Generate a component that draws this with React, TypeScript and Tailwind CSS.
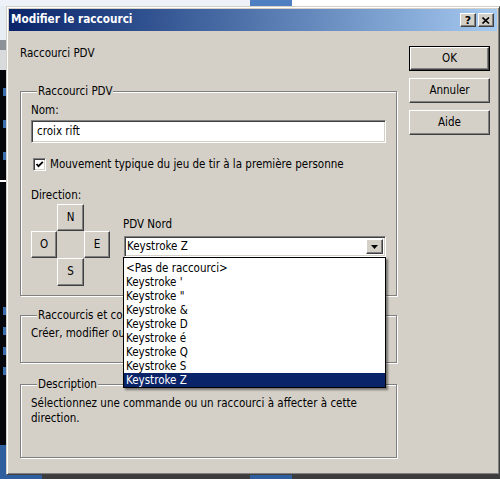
import React from "react";

const raised =
  "border border-t-white border-l-white border-r-[#404040] border-b-[#404040] shadow-[inset_-1px_-1px_0_#808080]";
const sunken =
  "border border-t-[#808080] border-l-[#808080] border-r-white border-b-white shadow-[inset_1px_1px_0_#404040,inset_-1px_-1px_0_#d4d0c8]";
const group =
  "border border-[#808080] shadow-[inset_1px_1px_0_#fff,1px_1px_0_#fff]";

function GroupLabel({ children }: { children: React.ReactNode }) {
  return (
    <div className="w-fit -mt-[8px] ml-[7px] px-[1px] bg-[#d4d0c8] leading-[14px] h-[14px] whitespace-nowrap">
      {children}
    </div>
  );
}

function Btn({ label, isDefault }: { label: string; isDefault?: boolean }) {
  if (isDefault) {
    return (
      <div className="h-[25px] w-[81px] border border-black">
        <div className={`h-full w-full ${raised} flex items-center justify-center bg-[#d4d0c8]`}>
          {label}
        </div>
      </div>
    );
  }
  return (
    <div className={`h-[25px] w-[81px] ${raised} flex items-center justify-center bg-[#d4d0c8]`}>
      {label}
    </div>
  );
}

function CrossBtn({ label }: { label: string }) {
  return (
    <div className={`${raised} flex items-center justify-center bg-[#d4d0c8]`}>{label}</div>
  );
}

const items = [
  "<Pas de raccourci>",
  "Keystroke '",
  'Keystroke "',
  "Keystroke &",
  "Keystroke D",
  "Keystroke é",
  "Keystroke Q",
  "Keystroke S",
  "Keystroke Z",
];

export default function App() {
  return (
    <div className="w-[500px] h-[479px] overflow-hidden flex flex-col bg-[#3c3c3c] font-['DejaVu_Sans_Condensed','DejaVu_Sans',sans-serif] text-[11.5px] text-black">
      {/* top strip */}
      <div className="h-[6px] flex bg-[#f3f5f9]">
        <div className="w-[250px] bg-[#eef2f8]" />
        <div className="w-[42px] bg-[#4f7fc0]" />
        <div className="flex-1 bg-white" />
      </div>
      {/* middle */}
      <div className="h-[469px] flex">
        <div className="w-[6px] flex flex-col">
          <div className="h-[34px] bg-[#e8edf4]" />
          <div className="h-[10px] bg-[#8d9198]" />
          <div className="h-[20px] bg-[#d8dadc]" />
          <div className="h-[110px] bg-[#05070d] flex flex-col gap-[24px] pt-[18px]">
            <div className="h-[8px] w-[3px] ml-[3px] bg-[#3c6fb0]" />
            <div className="h-[8px] w-[3px] ml-[3px] bg-[#3c6fb0]" />
            <div className="h-[8px] w-[3px] ml-[3px] bg-[#3c6fb0]" />
          </div>
          <div className="h-[2px] bg-white" />
          <div className="flex-1 bg-[#05070d] flex flex-col justify-end gap-[12px] pb-[70px]">
            <div className="h-[8px] w-[3px] ml-[3px] bg-[#3c6fb0]" />
            <div className="h-[8px] w-[3px] ml-[3px] bg-[#3c6fb0]" />
            <div className="h-[8px] w-[3px] ml-[3px] bg-[#3c6fb0]" />
            <div className="h-[8px] w-[3px] ml-[3px] bg-[#3c6fb0]" />
          </div>
          <div className="h-[30px] bg-[#2f5f9e]" />
        </div>
        {/* dialog */}
        <div className="w-[494px] h-full border border-t-[#d4d0c8] border-l-[#d4d0c8] border-r-[#404040] border-b-[#404040] shadow-[inset_1px_1px_0_#fff,inset_-1px_-1px_0_#808080] p-[2px] bg-[#d4d0c8] flex flex-col">
          {/* title bar */}
          <div className="h-[22px] bg-gradient-to-r from-[#0a246a] to-[#a6caf0] flex items-center pl-[2px] pr-[3px]">
            <div className="flex-1 text-white font-bold text-[11.7px] leading-none">Modifier le raccourci</div>
            <div className={`w-[16px] h-[14px] ${raised} bg-[#d4d0c8] flex items-center justify-center font-['DejaVu_Sans',sans-serif] font-bold text-[11px] leading-none`}>
              ?
            </div>
            <div className={`ml-[2px] w-[16px] h-[14px] ${raised} bg-[#d4d0c8] flex items-center justify-center`}>
              <svg width="8" height="7" viewBox="0 0 8 7">
                <path d="M0.5 0.5 L7 6.5 M7 0.5 L0.5 6.5" stroke="black" strokeWidth="1.6" />
              </svg>
            </div>
          </div>
          {/* body */}
          <div className="flex-1 flex pt-[15px] pl-[11px]">
            {/* left column */}
            <div className="w-[377px] flex flex-col">
              <div className="h-[14px] leading-[14px]">Raccourci PDV</div>

              {/* group 1 */}
              <div className={`mt-[31px] ${group} pl-[9px] pr-[10px] pb-[9px] flex flex-col`}>
                <GroupLabel>Raccourci PDV</GroupLabel>
                <div className="mt-[5px] h-[14px] leading-[14px] ml-[1px]">Nom:</div>
                <div className={`mt-[3px] ml-[1px] h-[23px] bg-white ${sunken} flex items-center pl-[5px]`}>
                  croix rift
                </div>
                <div className="mt-[14px] h-[14px] flex items-center">
                  <div className={`ml-[3px] w-[13px] h-[13px] bg-white ${sunken} flex items-center justify-center`}>
                    <svg width="9" height="9" viewBox="0 0 9 9">
                      <path d="M1.5 4 L3.5 6.2 L7.8 1.8" stroke="black" strokeWidth="1.8" fill="none" />
                    </svg>
                  </div>
                  <div className="ml-[4px] leading-[14px]">
                    Mouvement typique du jeu de tir à la première personne
                  </div>
                </div>
                <div className="mt-[17px] h-[14px] leading-[14px] ml-[1px]">Direction:</div>
                <div className="mt-[2px] flex">
                  <div className="grid grid-cols-[26px_27px_26px] grid-rows-[27px_27px_28px] ml-[1px]">
                    <div />
                    <CrossBtn label="N" />
                    <div />
                    <CrossBtn label="O" />
                    <div />
                    <CrossBtn label="E" />
                    <div />
                    <CrossBtn label="S" />
                    <div />
                  </div>
                  <div className="ml-[13px] flex-1 flex flex-col pt-[13px]">
                    <div className="h-[14px] leading-[14px]">PDV Nord</div>
                    <div className="mt-[5px] ml-[1px] relative">
                      <div className={`h-[21px] bg-white ${sunken} flex items-center pl-[2px] pr-[2px]`}>
                        <div className="flex-1">Keystroke Z</div>
                        <div className={`w-[17px] h-[15px] ${raised} bg-[#d4d0c8] flex items-center justify-center`}>
                          <svg width="7" height="4" viewBox="0 0 7 4">
                            <path d="M0 0 H7 L3.5 4 Z" fill="black" />
                          </svg>
                        </div>
                      </div>
                      <div className="absolute top-full -left-[1px] right-0 z-10 bg-white border border-black pt-[3px] shadow-[2px_2px_2px_rgba(0,0,0,0.45)]">
                        {items.map((it, i) => (
                          <div
                            key={i}
                            className={`h-[14px] leading-[14px] pl-[2px] ${
                              i === items.length - 1 ? "bg-[#0a246a] text-white" : ""
                            }`}
                          >
                            {it}
                          </div>
                        ))}
                      </div>
                    </div>
                  </div>
                </div>
              </div>

              {/* group 2 */}
              <div className={`mt-[19px] ${group} pl-[9px] pr-[10px] pb-[22px] flex flex-col`}>
                <GroupLabel>Raccourcis et com</GroupLabel>
                <div className="mt-[4px] h-[14px] leading-[14px] ml-[1px] whitespace-nowrap">
                  Créer, modifier ou
                </div>
              </div>

              {/* group 3 */}
              <div className={`mt-[21px] ${group} pl-[9px] pr-[10px] pb-[31px] flex flex-col`}>
                <GroupLabel>Description</GroupLabel>
                <div className="mt-[5px] leading-[15px] ml-[1px]">
                  Sélectionnez une commande ou un raccourci à affecter à cette
                  <br />
                  direction.
                </div>
              </div>
            </div>
            {/* right column */}
            <div className="ml-[12px] flex flex-col gap-[7px]">
              <Btn label="OK" isDefault />
              <Btn label="Annuler" />
              <Btn label="Aide" />
            </div>
          </div>
        </div>
      </div>
      {/* bottom strip */}
      <div className="h-[4px] flex">
        <div className="w-[42px] bg-[#2f5f9e]" />
        <div className="w-[208px] bg-[#3c3c3c]" />
        <div className="w-[42px] bg-[#2f5f9e]" />
        <div className="flex-1 bg-[#3c3c3c]" />
      </div>
    </div>
  );
}
